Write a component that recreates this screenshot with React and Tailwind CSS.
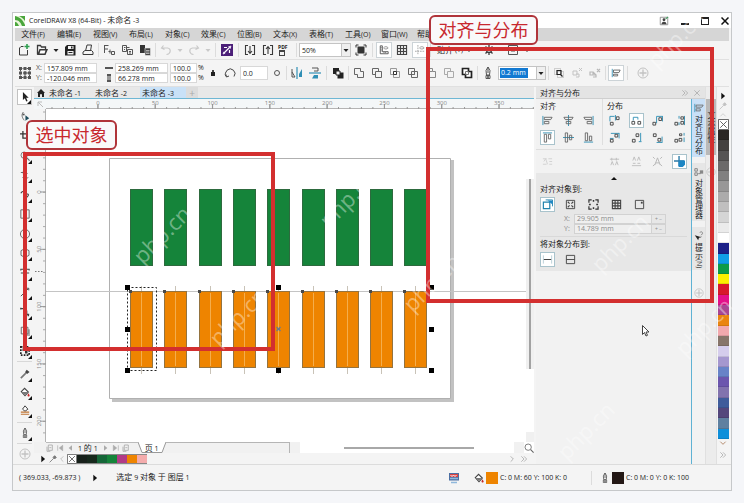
import { useState } from "react";
import clsx from "clsx";

const INK = "#3a3a3a";
const BLUE = "#2f8fb5";

// All icons are drawn on a 12x12 grid
const ICONS = {
  newDoc: (
    <>
      <path d="M5.5 2.5H3L1.5 4v7h8V6" stroke={INK} fill="none" />
      <path d="M9 0v5M6.5 2.5h5" stroke="#2f9e4f" strokeWidth="1.6" />
    </>
  ),
  open: (
    <>
      <path d="M1.5 10.5v-9h3l1 1.500h4v2" stroke={INK} strokeWidth="1.3" fill="none" />
      <path d="M1 11l2.500-6H12l-2.500 6z" fill={INK} />
      <path d="M4.500 6.500h5L8.500 9.500h-5z" fill="#fff" />
    </>
  ),
  save: (
    <>
      <path d="M1 3l2-2h8.500v10.500H1z" fill="#222" />
      <path d="M4 2h5.500v3H4zM3.500 7h6v3.500h-6z" fill="#f4f4f4" />
      <path d="M7 2.500h1.500v2H7zM4.500 8h4v1h-4z" fill="#222" />
    </>
  ),
  print: (
    <>
      <path d="M3.500 7L5 1h4.500L8.500 7" stroke={INK} fill="none" />
      <path d="M1 10.500V8l2-1.500h6.500L11 8v2.500z" stroke={INK} fill="none" />
    </>
  ),
  cut: (
    <path d="M1 1.500h4.500M1.500 1v8M1.500 5H5M7 5.500v4M5.500 7.500h2M8.500 7.500h3v3h-3z" stroke="#555" fill="none" />
  ),
  copy: (
    <path d="M1.500 1.500h4v6h-4zM4.500 3.500h4M6.500 5.500h5v5h-5zM8 7.500h2M8 9h2M3 3.500h1M3 5.500h1" stroke="#555" fill="none" />
  ),
  paste: (
    <>
      <path d="M1 1h5v8H1z" fill="#333" />
      <path d="M6 4h5.500v7.500H6z" fill="#444" stroke="#eee" strokeWidth=".6" />
      <path d="M7 6.500h3.500M7 8h3.500M7 9.500h3.500" stroke="#ddd" strokeWidth=".7" />
    </>
  ),
  undo: <path d="M3.500 1.500L1.500 4l3 1.500M2 4h5.500c4 .5 3.500 6-1 6.500" stroke="#c9c9c9" strokeWidth="1.200" fill="none" />,
  redo: <path d="M8.500 1.500l2 2.500-3 1.500M10 4H4.500C.5 4.500 1 10 5.500 10.500" stroke="#c9c9c9" strokeWidth="1.200" fill="none" />,
  connect: (
    <>
      <path d="M0 0h12v12H0z" fill="#4b1f78" />
      <path d="M2 10l8-8M3 3.500h3M8.500 6v3" stroke="#fff" strokeWidth="1.200" />
      <path d="M7 2h3v3zM2 7.500V10h2.500z" fill="#e9dcf6" />
    </>
  ),
  importFile: (
    <path d="M4 1.500H1.500v9H4M8 1.500h2.500v9H8M6 2v7M4 7l2 2.300L8 7" stroke={INK} strokeWidth="1.100" fill="none" />
  ),
  exportFile: (
    <path d="M4 1.500H1.500v9H4M8 1.500h2.500v9H8M6 10V3M4 5l2-2.300L8 5" stroke={INK} strokeWidth="1.100" fill="none" />
  ),
  fullscreen: (
    <>
      <path d="M1 3.500V1h2.500M8.500 1H11v2.500M11 8.500V11H8.500M3.500 11H1V8.500" stroke="#333" fill="none" />
      <path d="M2.500 2.500h7v7h-7z" fill="#333" />
    </>
  ),
  rulers: (
    <>
      <path d="M1.500 1v9.500H11V8H4V1zM2 3h1M2 5h1M2 7h1M6 9.500v-1M8 9.500v-1" stroke="#444" fill="none" />
      <path d="M5.500 3.500c1.500-2 4-2 5.500 0-1.500 1.800-4 1.800-5.500 0z" stroke="#666" fill="none" strokeWidth=".8" />
    </>
  ),
  grid: <path d="M1.500 1.500h9v9h-9zM4.500 1.500v9M7.500 1.500v9M1.500 4.500h9M1.500 7.500h9" stroke="#444" strokeWidth="1.200" fill="none" />,
  guides: (
    <>
      <path d="M3.500 0v12M0 7.500h11" stroke="#999" strokeDasharray="2 1" />
      <path d="M5.500 3.500c1.500-2 4-2 5.500 0-1.500 1.800-4 1.800-5.500 0z" stroke="#777" fill="none" strokeWidth=".8" />
    </>
  ),
  gear: (
    <path d="M6 1v2M6 9v2M1 6h2M9 6h2M2.500 2.500L4 4M8 8l1.500 1.500M9.500 2.500L8 4M4 8L2.500 9.500M6 3.500a2.500 2.500 0 100 5 2.500 2.500 0 000-5z" stroke={INK} strokeWidth="1.300" fill="none" />
  ),
  launch: <path d="M1.500 1.500h9v9h-9zM1.500 3.500h9M4 7h4" stroke="#555" fill="none" />,
  origin: (
    <>
      <path d="M1.500 1.500h9v9h-9zM6 1v10M1 6h10" stroke="#555" strokeDasharray="2 1" fill="none" />
      <path d="M0 0h3v3H0zM4.500 0h3v3h-3zM9 0h3v3H9zM0 4.500h3v3H0zM4.500 4.500h3v3h-3zM9 4.500h3v3H9zM0 9h3v3H0zM4.500 9h3v3h-3zM9 9h3v3H9z" fill="#555" />
    </>
  ),
  rotate: <path d="M2.500 9.500A4.700 4.700 0 1110 9.500M1 7.500l1.500 2.500L5 9" stroke="#444" fill="none" />,
  mirrorH: (
    <>
      <path d="M1 2v8h3L1 5" stroke="#555" fill="none" />
      <path d="M11 2v8H8V7z" fill={BLUE} />
      <path d="M6 0v12" stroke={BLUE} strokeWidth="1.200" />
    </>
  ),
  mirrorV: (
    <>
      <path d="M3 1h6v3H5" stroke="#555" fill="none" />
      <path d="M0 6h12" stroke={BLUE} strokeWidth="1.200" />
      <path d="M3 11.500h6V8H5z" fill={BLUE} />
    </>
  ),
  order: (
    <>
      <path d="M1 1h6v6H1zM5.500 5.500h6v6h-6z" fill="#222" />
      <path d="M4 4h4v4H4z" fill="#f4f4f4" stroke="#222" />
    </>
  ),
  weld: <path d="M1.500 1.500h6v3h3v6h-6v-3h-3z" stroke="#666" fill="none" />,
  trim: <path d="M4 7.500H1.500v-6h6V4M4.500 4.500h6v6h-6z" stroke="#666" fill="none" />,
  intersect: (
    <>
      <path d="M1.500 1.500h6v6h-6zM4.500 4.500h6v6h-6z" stroke="#999" fill="none" />
      <path d="M4.500 4.500h3v3h-3z" stroke="#333" fill="#fff" />
    </>
  ),
  simplify: <path d="M1.500 1.500h6v6h-6zM7.500 4.500h3v6h-6v-3M4.500 4.500h3v3h-3z" stroke="#666" fill="none" />,
  frontMinus: <path d="M1.500 1.500h6v3h-3v3h-3zM7.500 4.500h3v6h-6v-3" stroke="#888" fill="none" />,
  backMinus: <path d="M4 7.500H1.500v-6h6V4M4.500 4.500h6v6h-6z" stroke="#aaa" fill="none" />,
  boundary: (
    <>
      <path d="M1.500 1.500h6v3h3v6h-6v-3h-3z" stroke="#222" strokeWidth="1.700" fill="#fff" />
      <path d="M4.500 4.500h3v3h-3z" stroke="#777" fill="none" />
    </>
  ),
  pen: (
    <>
      <path d="M6 0L4 3.500 4.500 8h3L8 3.500zM6 0v6M4 8.500h4v3H4z" stroke="#555" fill="none" />
      <path d="M5 9h2v2H5z" fill="#777" />
    </>
  ),
  combine: (
    <>
      <path d="M1.500 1.500h6v6h-6zM4.500 4.500h6v6h-6z" stroke="#aaa" strokeDasharray="1 1" fill="none" />
      <path d="M4 3.500h4v4H4zM7 7l2.500 2.500" stroke="#222" strokeWidth="1.200" fill="none" />
    </>
  ),
  ungroup: <path d="M2 4h4v4H2zM5 7h3v3H5M8 1l3 3M11 1L8 4" stroke="#c3c3c3" fill="none" />,
  ungroupAll: <path d="M1 5h3v3H1zM4 8h3v2H4M8 2l3 3M11 2L8 5M4 5l3 3" stroke="#b8b8b8" strokeWidth="1.200" fill="none" />,
  alignDist: (
    <>
      <path d="M1.500 1v10" stroke={BLUE} />
      <path d="M3 2.500h8L9.500 5.500H3zM3 7.500h5v2H3z" stroke="#555" fill="none" />
    </>
  ),
  plus: (
    <>
      <circle cx="6" cy="6" r="5" stroke="#c2c2c2" fill="none" />
      <path d="M6 2.500v7M2.500 6h7" stroke="#c2c2c2" strokeWidth="1.300" />
    </>
  ),
  pick: <path d="M3.500 0v9.500l2.300-2L7.500 11.500l1.600-.7L7.400 7h3z" fill="#222" />,
  shape: (
    <>
      <path d="M4 0C1 4 3 7 5 10" stroke="#555" fill="none" />
      <path d="M3 2h2.500v2H3z" fill="#555" />
      <path d="M6.500 4v6.500L11 7.500z" fill="#1d4b5a" />
    </>
  ),
  crop: <path d="M3.500 0v8.500H12M0 3.500h8.500V12" stroke="#333" strokeWidth="1.500" fill="none" />,
  zoom: (
    <>
      <circle cx="5" cy="5" r="3.800" stroke="#666" fill="none" />
      <path d="M8 8l3.500 3.500" stroke="#666" strokeWidth="1.400" />
    </>
  ),
  freehand: <path d="M1 3h4l1 4 3-3M3 9c2-3 4 2 7 0M4 1v4" stroke="#555" fill="none" />,
  artistic: <path d="M1 4c2-4 5-2 4 1s2 5 4 3 1-4-1-3-3 3-4 4" stroke="#444" strokeWidth="1.300" fill="none" />,
  rect: <path d="M1 1h10v10H1z" stroke="#555" fill="none" />,
  ellipse: <circle cx="6" cy="6" r="5.500" stroke="#555" fill="none" />,
  polygon: <path d="M6 .6l4.800 2.600v5.600L6 11.400 1.200 8.800V3.200z" stroke="#555" fill="none" />,
  text: <path d="M1 3V1.500h10V3M6 1.500v9M4 10.500h4M1 6h3M8 6h3" stroke="#444" strokeWidth="1.300" fill="none" />,
  line: <path d="M1 11l3-3M5 7l5-5M8 1.500h2.500V4" stroke="#555" strokeWidth="1.200" fill="none" />,
  connector: <path d="M1 2h4v3h3v4h3M1 1v2M10 8v3" stroke="#444" strokeWidth="1.600" fill="none" />,
  shadow: (
    <>
      <path d="M4 4h8v8H4z" fill="#aaa" />
      <path d="M1.500 1.500h8v8h-8z" stroke="#555" fill="#f4f4f4" />
    </>
  ),
  transparency: (
    <>
      <path d="M1 1h10v10H1z" stroke="#222" strokeWidth="2" strokeDasharray="2 1.500" fill="none" />
      <path d="M3 3h3v3H3zM6 6h3v3H6z" fill="#333" />
    </>
  ),
  eyedropper: (
    <>
      <path d="M1 11l6-6" stroke="#777" strokeWidth="2" />
      <path d="M6 4l2-3 3.500 2.500-3 2.500z" fill="#444" />
    </>
  ),
  fill: (
    <>
      <path d="M1.500 5.500l4-4 4.500 4.500-4 4.500z" stroke="#444" strokeWidth="1.300" fill="#fff" />
      <path d="M2.500 6h6.500L6 9.500z" fill="#777" />
      <path d="M10 7.500l1.600 2.300c0 2-2.600 2-2.600 0z" fill="#c62828" />
    </>
  ),
  smartFill: (
    <>
      <path d="M3 5l3-4 3.500 4L6 7.500z" stroke="#444" strokeWidth="1.200" fill="#fff" />
      <path d="M1 8.500h10M1 11h10" stroke="#c07433" strokeWidth="1.300" />
    </>
  ),
  userAccount: (
    <>
      <path d="M1.500 1.500h9v9h-9z" stroke="#888" fill="#fff" />
      <circle cx="6" cy="4.500" r="1.700" fill="#444" />
      <path d="M3 10c0-4 6-4 6 0z" fill="#444" />
      <path d="M8 3.500L11 1" stroke="#3b9b5a" strokeWidth="1.300" />
    </>
  ),
  monitor: (
    <>
      <path d="M1 1h10v7.500H1z" fill="#4b6fa3" />
      <path d="M2 2h8v3H2z" fill="#d84343" />
      <path d="M2.500 3l1.500 1.500L5.500 3 7 4.500 8.500 3" stroke="#fff" fill="none" />
      <path d="M3 10.500h6M2 6.500h8" stroke="#8fb8dc" strokeWidth="1.500" />
    </>
  ),
  // Alignment group
  alignLeft: (
    <>
      <path d="M1 1v10" stroke={BLUE} />
      <path d="M2.500 2.500h8.500L9.500 5h-7zM2.500 7h5v2.500h-5z" stroke="#666" fill="none" />
    </>
  ),
  alignCenterH: (
    <>
      <path d="M6 0v12" stroke={BLUE} />
      <path d="M1 2.500h10L9.500 5h-7zM3.500 7h5v2.500h-5z" stroke="#666" fill="none" />
    </>
  ),
  alignRight: (
    <>
      <path d="M11 1v10" stroke={BLUE} />
      <path d="M1 2.500h8.500V5H2.500zM4.500 7h5v2.500h-5z" stroke="#666" fill="none" />
    </>
  ),
  alignTop: (
    <>
      <path d="M1 1h10" stroke={BLUE} />
      <path d="M2.500 2.500H5V11H2.500zM7 2.500h2.500v5H7z" stroke="#666" fill="none" />
    </>
  ),
  alignCenterV: (
    <>
      <path d="M0 6h12" stroke={BLUE} />
      <path d="M2.500 1H5v10H2.500zM7 3.500h2.500v5H7z" stroke="#666" fill="none" />
    </>
  ),
  alignBottom: (
    <>
      <path d="M1 11h10" stroke={BLUE} />
      <path d="M2.500 1H5v8.500H2.500zM7 4.500h2.500v5H7z" stroke="#666" fill="none" />
    </>
  ),
  // Distribution group
  distLeft: (
    <>
      <path d="M1 7V1.500h5M7 6V0" stroke={BLUE} fill="none" />
      <path d="M1.500 8h3v3h-3zM8 2h3v3H8z" stroke="#444" fill="none" />
    </>
  ),
  distCenter: (
    <>
      <path d="M2.500 6V2.500h5V5" stroke={BLUE} fill="none" />
      <path d="M1 7h3v3H1zM7.500 7h3v3h-3z" stroke="#444" fill="none" />
    </>
  ),
  distRight: (
    <>
      <path d="M5 9V1.500h6M11.500 1v6" stroke={BLUE} fill="none" />
      <path d="M1 8h3v3H1zM7.500 3h3v3h-3z" stroke="#444" fill="none" />
    </>
  ),
  distSpaceH: (
    <>
      <path d="M5.500 1v3M5.500 8v3M11.500 1v10" stroke={BLUE} fill="none" />
      <path d="M1 8h3v3H1zM7.500 2h3v2.500h-3zM7.500 7h3v3h-3z" stroke="#444" fill="none" />
    </>
  ),
  distTop: (
    <>
      <path d="M2 1.500h9M11 1v6M1 7h4" stroke={BLUE} fill="none" />
      <path d="M1.500 8h3v3h-3zM6.500 2.500h3v3h-3z" stroke="#444" fill="none" />
    </>
  ),
  distMiddle: (
    <>
      <path d="M10.500 1v9M8.500 10.500h3" stroke={BLUE} fill="none" />
      <path d="M1.500 8h3v3h-3zM5.500 2h3v3h-3z" stroke="#444" fill="none" />
    </>
  ),
  distBottom: (
    <>
      <path d="M5 11.500h6.500M11 5v6" stroke={BLUE} fill="none" />
      <path d="M1.500 2h3v3h-3zM6.500 7h3v3h-3z" stroke="#444" fill="none" />
    </>
  ),
  distSpaceV: (
    <>
      <path d="M11 1v3M11 6v5" stroke={BLUE} fill="none" />
      <path d="M1 8h3v3H1zM5.500 7h3v3h-3zM6 2h2.500v2H6z" stroke="#444" fill="none" />
    </>
  ),
  textLine: <path d="M1 3h4M2 6l2-3 2 6M7 3h4M8 6h3M1 9h4M8 9h3" stroke="#d0d0d0" fill="none" />,
  textFirst: <path d="M1 3.500h10M3 2v3M8 2v3M2 10l1.500-4L5 10M7 10l1.500-4L10 10" stroke="#bdbdbd" fill="none" />,
  textLast: <path d="M1 10.500h10M2 5l1.500-4L5 5M7 5l1.500-4L10 5M2 8h3M7 8h3" stroke="#bdbdbd" fill="none" />,
  textBox: (
    <>
      <path d="M1 1l2 2M11 1L9 3M1 11l2-2M11 11L9 9" stroke="#b5b5b5" />
      <path d="M3 10l3-8 3 8M4 7.500h4" stroke="#b5b5b5" fill="none" />
    </>
  ),
  refPoint: (
    <>
      <path d="M5.500 0v11M0 5.500h11" stroke="#2a7aa8" strokeWidth="1.500" />
      <path d="M5 5h7v4.500L9.500 12H5z" fill="#1c86c4" />
    </>
  ),
  activeObjects: (
    <>
      <path d="M1.500 3.500h7v7h-7z" stroke="#2384ad" strokeWidth="1.300" fill="#fff" />
      <path d="M4 1h7.500v7" stroke="#2384ad" fill="none" />
      <path d="M6 1.500h5.500V6z" fill="#1c86c4" />
    </>
  ),
  pageEdge: (
    <>
      <path d="M1.500 1.500h9v9h-9z" stroke="#444" fill="none" />
      <path d="M3 3l2 2M9 3L7 5M3 9l2-2M9 9L7 7" stroke="#444" strokeWidth="1.200" />
    </>
  ),
  pageCenter: (
    <>
      <path d="M1 4V1h3M8 1h3v3M11 8v3H8M4 11H1V8" stroke="#333" strokeWidth="1.300" fill="none" />
      <path d="M6 1v2M6 9v2M1 6h2M9 6h2" stroke="#333" strokeWidth="1.600" />
    </>
  ),
  pagePoint: (
    <>
      <path d="M1.500 1.500h9v9h-9z" stroke="#444" fill="none" />
      <path d="M7.500 3h2v2h-2z" fill="#444" />
    </>
  ),
  spanH: (
    <>
      <path d="M1.500 1.500v9M10.500 1.500v9" stroke="#b9cfd8" />
      <path d="M2 6h8" stroke="#333" />
    </>
  ),
  spanPage: <path d="M1.500 1.500h9v9h-9zM1.500 6h9" stroke="#444" fill="none" />,
  objects: (
    <>
      <path d="M1 2h3v3H1zM1 7h3v3H1zM5 8h3" stroke="#777" fill="none" />
      <path d="M7 4h4v4H7z" fill="#888" />
    </>
  ),
  hints: (
    <>
      <path d="M1 5l4 6 1-3 3-.5z" fill="#222" />
      <path d="M7 2c1-2 4-1 3 1.500L8.500 5M8.500 6v1" stroke="#777" fill="none" />
    </>
  ),
  noFill: <path d="M.5.5h11v11H.5zM2.500 2.500l7 7M9.500 2.500l-7 7" stroke="#555" fill="#fff" />,
  pageAdd: <path d="M3.500 1.500h6v8h-6zM1.500 4v7h5M5 5.500h3" stroke="#999" fill="none" />,
  first: <path d="M2.500 2v8M10 2L5 6l5 4z" stroke="#aaa" fill="#aaa" />,
  prev: <path d="M9 2L4 6l5 4z" fill="#aaa" />,
  next: <path d="M3 2l5 4-5 4z" fill="#aaa" />,
  last: <path d="M9.500 2v8M2 2l5 4-5 4z" stroke="#aaa" fill="#aaa" />,
  play: <path d="M4 2l4.500 4L4 10z" fill="#111" />,
  dropper: <path d="M2 10l5-5M6 4l2-2 2 2-2 2z" stroke="#777" fill="#777" />,
  chevLeft: <path d="M8 2L4 6l4 4" stroke="#bbb" strokeWidth="1.300" fill="none" />,
  chevRight: <path d="M4 2l4 4-4 4" stroke="#aaa" strokeWidth="1.300" fill="none" />,
  chevUp: <path d="M2 8l4-4 4 4" stroke="#ccc" strokeWidth="1.300" fill="none" />,
  chevDown: <path d="M2 4l4 4 4-4" stroke="#b78f72" strokeWidth="1.500" fill="none" />,
  chevDouble: <path d="M2 2l4 4-4 4M6 2l4 4-4 4" stroke="#aaa" strokeWidth="1.200" fill="none" />,
  close: <path d="M2 2l8 8M10 2l-8 8" stroke="#aaa" strokeWidth="1.200" />,
  home: <path d="M6 0l6 6h-1.500v6h-3V8h-3v4h-3V6H0z" fill="#222" />,
};

const MENUS = ["文件(F)", "编辑(E)", "视图(V)", "布局(L)", "对象(C)", "效果(C)", "位图(B)", "文本(X)", "表格(T)", "工具(O)", "窗口(W)", "帮助(H)"];

const TOOLS = ["pick", "shape", "crop", "zoom", "freehand", "artistic", "rect", "ellipse", "polygon", "text", "line", "connector", "shadow", "transparency"];

const PALETTE = [
  "bg-[#2b2724]", "bg-[#444140]", "bg-[#565454]", "bg-[#6c6a6a]", "bg-[#818080]",
  "bg-[#989797]", "bg-[#acabab]", "bg-[#c0bfbf]", "bg-[#d5d5d5]", "bg-[#ebebeb]",
  "bg-white", "bg-[#1c2088]", "bg-[#109ee6]", "bg-[#0e9b48]", "bg-[#fdf000]",
  "bg-[#d8182c]", "bg-[#e3108a]", "bg-[#a94794]", "bg-[#ea8510]", "bg-[#f2a9ae]",
  "bg-[#87756a]", "bg-[#d5cdec]", "bg-[#a597cf]", "bg-[#6883c8]", "bg-[#6c56ae]",
  "bg-[#8273ae]", "bg-[#3f5c9b]", "bg-[#54477c]", "bg-[#5f80a0]", "bg-[#0e8fda]",
];

const DOC_COLORS = ["bg-[#17201a]", "bg-[#16281c]", "bg-[#156638]", "bg-[#15843a]", "bg-[#b23b86]", "bg-[#ee8400]", "bg-[#f4acac]"];

const WATERMARKS = [
  "left-[126px] top-[222px]",
  "left-[202px] top-[304px]",
  "left-[312px] top-[186px]",
  "left-[396px] top-[270px]",
  "left-[584px] top-[230px]",
  "left-[668px] top-[314px]",
  "left-[550px] top-[418px]",
  "left-[640px] top-[26px]",
  "left-[42px] top-[168px]",
];

function Icon({ name, className = "size-3" }) {
  return (
    <svg viewBox="0 0 12 12" className={clsx("shrink-0", className)} aria-hidden="true">
      {ICONS[name]}
    </svg>
  );
}

// Chinese glyphs are set one pixel larger than the latin text beside them
function Label({ text }) {
  return text.split(/([\u4e00-\u9fff]+)/).map((part, i) =>
    /[\u4e00-\u9fff]/.test(part) ? <span key={i} className="text-[8px]">{part}</span> : part
  );
}

function IconButton({ name, boxed, className }) {
  return (
    <button
      type="button"
      aria-label={name}
      className={clsx("flex size-4 shrink-0 items-center justify-center", boxed && "border border-[#ccd3d7] bg-white", className)}
    >
      <Icon name={name} className={boxed ? "size-2.5" : "size-3"} />
    </button>
  );
}

function Caret({ faded }) {
  return (
    <svg viewBox="0 0 8 8" className="size-2 shrink-0" aria-hidden="true">
      <path d="M1.500 3h5L4 6z" fill={faded ? "#c9c9c9" : "#222"} />
    </svg>
  );
}

function Sep({ wide }) {
  return <span className={clsx("h-3.5 w-px shrink-0 bg-[#dcdcdc]", wide && "mx-px")} />;
}

function Field({ label, value, className }) {
  return (
    <input
      aria-label={label}
      defaultValue={value}
      className={clsx("h-2.5 min-w-0 border border-[#d8d8d8] bg-white px-0.5 leading-none outline-none", className)}
    />
  );
}

function Combo({ label, value, selected, className }) {
  return (
    <div className={clsx("relative h-3.5 shrink-0", className)}>
      <select
        aria-label={label}
        className="h-full w-full appearance-none border border-[#c4c4c4] bg-white pl-0.5 leading-none outline-none"
      >
        <option>{value}</option>
      </select>
      {selected && (
        <span className="pointer-events-none absolute top-0.5 left-0.5 h-2.5 w-7 bg-[#1279d2] px-px leading-[10px] whitespace-nowrap text-white">
          {value}
        </span>
      )}
      <span className="pointer-events-none absolute inset-y-0 right-0 flex w-2.5 items-center justify-center border border-[#c4c4c4] bg-[#efefef]">
        <Caret />
      </span>
    </div>
  );
}

function TitleBar() {
  return (
    <header className="flex h-[15px] items-center gap-1 bg-white px-0.5">
      <svg viewBox="0 0 10 10" className="size-2.5" aria-hidden="true">
        <path d="M0 0h10v10H0z" fill="#4aa63c" />
        <path d="M0 0c5 1 8 4 10 9V5C8 2 5 0 3 0zM0 4c4 0 6 3 7 6H4C3 8 2 6 0 6z" fill="#e8f5d8" />
      </svg>
      <h1><Label text="CorelDRAW X8 (64-Bit) - 未命名 -3" /></h1>
      <div className="ml-auto flex items-center gap-3">
        <button type="button" aria-label="Account"><Icon name="userAccount" className="size-2.5" /></button>
        <button type="button" aria-label="Minimize" className="flex size-2 items-end"><span className="h-0.5 w-full bg-[#222]" /></button>
        <button type="button" aria-label="Maximize" className="size-2 border border-t-2 border-[#222]" />
        <button type="button" aria-label="Close" className="size-2">
          <svg viewBox="0 0 8 8" className="size-2"><path d="M.5.5l7 7M7.500.5l-7 7" stroke="#111" strokeWidth="1.500" /></svg>
        </button>
      </div>
    </header>
  );
}

function StandardBar() {
  return (
    <div className="flex h-[19px] items-center gap-0.5 overflow-hidden border-b border-[#e0e0e0] px-px">
      <IconButton name="newDoc" />
      <IconButton name="open" />
      <Caret />
      <IconButton name="save" />
      <IconButton name="print" />
      <Sep />
      <IconButton name="cut" />
      <IconButton name="copy" />
      <IconButton name="paste" />
      <Sep />
      <IconButton name="undo" />
      <Caret faded />
      <IconButton name="redo" />
      <Caret faded />
      <Sep wide />
      <IconButton name="connect" />
      <Sep wide />
      <IconButton name="importFile" />
      <IconButton name="exportFile" />
      <button type="button" className="flex w-4 shrink-0 flex-col items-start text-[5px] leading-[5px] font-bold">
        PDF
        <span className="ml-px size-1.5 border border-[#444] border-t-2" />
      </button>
      <Sep />
      <Combo label="Zoom" value="50%" className="w-13" />
      <IconButton name="fullscreen" />
      <Sep wide />
      <IconButton name="rulers" boxed />
      <IconButton name="grid" />
      <IconButton name="guides" boxed />
      <Sep />
      <button type="button" className="ml-1 flex shrink-0 items-center gap-0.5"><Label text="贴齐(T)" /><Caret /></button>
      <IconButton name="gear" className="ml-1.5" />
      <IconButton name="launch" className="ml-1.5" />
      <Caret />
    </div>
  );
}

function PropertyBar() {
  return (
    <div className="flex h-[27px] items-center gap-0.5 border-b border-[#e0e0e0] px-0.5">
      <IconButton name="origin" />
      <div className="ml-px grid shrink-0 grid-cols-[8px_53px] items-center text-[#555]">
        <span>X:</span>
        <Field label="X" value="157.809 mm" className="text-[#222]" />
        <span>Y:</span>
        <Field label="Y" value="-120.046 mm" className="text-[#222]" />
      </div>
      <div className="ml-1.5 grid shrink-0 grid-cols-[10px_53px] items-center">
        <span className="h-0.5 w-2 bg-[#555]" />
        <Field label="Width" value="258.269 mm" />
        <span className="ml-0.5 h-2 w-1 border-y-2 border-[#555] bg-[#999]" />
        <Field label="Height" value="66.278 mm" />
      </div>
      <div className="grid shrink-0 grid-cols-[27px_8px] items-center gap-x-px">
        <Field label="Scale X" value="100.0" />
        <span>%</span>
        <Field label="Scale Y" value="100.0" />
        <span>%</span>
      </div>
      <button type="button" aria-label="Lock ratio" className="mr-1 ml-0.5 flex w-1.5 shrink-0 flex-col items-center">
        <span className="h-0.5 w-0.5 border border-b-0 border-[#444]" />
        <span className="size-1 bg-[#222]" />
      </button>
      <IconButton name="rotate" />
      <Field label="Rotation" value="0.0" className="h-3.5 w-7 shrink-0" />
      <span className="mx-1 size-1.5 shrink-0 rounded-full border border-[#555]" />
      <Sep />
      <IconButton name="mirrorH" />
      <IconButton name="mirrorV" />
      <Sep wide />
      <IconButton name="order" />
      <Sep />
      <IconButton name="weld" />
      <IconButton name="trim" />
      <IconButton name="intersect" />
      <IconButton name="simplify" />
      <IconButton name="frontMinus" />
      <IconButton name="backMinus" />
      <IconButton name="boundary" />
      <Sep />
      <IconButton name="pen" />
      <Combo label="Outline width" value="0.2 mm" selected className="w-12" />
      <Sep />
      <IconButton name="combine" />
      <IconButton name="ungroup" />
      <IconButton name="ungroupAll" />
      <Sep />
      <IconButton name="alignDist" boxed />
      <Sep wide />
      <IconButton name="plus" className="ml-1" />
    </div>
  );
}

function ToolButton({ name, active, onClick }) {
  return (
    <button
      type="button"
      aria-label={name}
      onClick={onClick}
      className={clsx("relative flex h-4 w-full shrink-0 items-center justify-center", active && "border border-[#c2c2c2] bg-white")}
    >
      <Icon name={name} className="size-2.5" />
      <svg viewBox="0 0 4 4" className="absolute right-0 bottom-0 size-1" aria-hidden="true">
        <path d="M4 0v4H0z" fill="#111" />
      </svg>
    </button>
  );
}

function Toolbox() {
  const [tool, setTool] = useState("pick");
  return (
    <aside className="flex w-[19px] shrink-0 flex-col gap-0.5 px-0.5 pt-0.5">
      <div className="flex flex-1 flex-col justify-between">
        {TOOLS.map((name) => (
          <ToolButton key={name} name={name} active={tool === name} onClick={() => setTool(name)} />
        ))}
      </div>
      <div className="flex flex-col gap-0.5 border-y border-[#d8d8d8] py-1">
        <ToolButton name="eyedropper" />
        <ToolButton name="fill" />
        <ToolButton name="smartFill" />
      </div>
      <ToolButton name="pen" />
      <div className="flex justify-center border-t border-[#d8d8d8] py-1">
        <Icon name="plus" />
      </div>
    </aside>
  );
}

// 50 mm on the ruler takes 57.3 px, ticks every 10 mm
const RULER_STEP = 57.3;

function HorizontalRuler() {
  return (
    <svg className="h-2.5 w-full bg-[#f4f7f8]" aria-hidden="true">
      <path d="M12 9.500H600" stroke="#b4b4b4" />
      {Array.from({ length: 44 }, (_, i) => (
        <path key={i} d={`M${18 + i * 11.46} ${i % 5 === 4 ? 6 : 8}V10`} stroke="#999" />
      ))}
      {Array.from({ length: 8 }, (_, i) => (
        <g key={i}>
          <path d={`M${64 + i * RULER_STEP} 5V10`} stroke="#999" />
          <text x={64 + i * RULER_STEP} y="6" textAnchor="middle" fontSize="6" fill="#888">{i * 50}</text>
        </g>
      ))}
      <path d="M4 3l5 5M4 7V3h4" stroke="#bbb" fill="none" />
    </svg>
  );
}

function VerticalRuler() {
  return (
    <svg className="w-3 shrink-0 self-stretch bg-[#f4f4f4]" aria-hidden="true">
      <path d="M11.500 0V400" stroke="#b4b4b4" />
      {Array.from({ length: 29 }, (_, i) => (
        <path key={i} d={`M9 ${3 + i * 11.46}H12`} stroke="#aaa" />
      ))}
      {Array.from({ length: 5 }, (_, i) => {
        const y = 83 + i * RULER_STEP;
        return (
          <g key={i}>
            <path d={`M6 ${y}H12`} stroke="#999" />
            <text x="7" y={y} textAnchor="middle" transform={`rotate(-90 7 ${y})`} fontSize="6" fill="#888">{i * 50}</text>
          </g>
        );
      })}
      <path d="M1 162.500h9" stroke="#777" strokeDasharray="1.500 1.500" />
    </svg>
  );
}

function Canvas() {
  const bars = Array.from({ length: 9 }, (_, i) => Math.round(84 + i * 34.3) + 0.5);
  const handles = [[81, 178], [232, 178], [385, 178], [81, 220], [385, 220], [81, 261], [232, 261], [385, 261]];
  return (
    <svg className="min-h-0 min-w-0 flex-1 bg-white" role="img" aria-label="Drawing">
      <path d="M404 51h4v242H66v-3h338z" fill="#c2c2c2" />
      <path d="M63.500 49.500h341v240h-341z" stroke="#b0b0b0" fill="#fff" />
      <path d="M0 182.500h600" stroke="#c4c4c4" />
      {bars.map((x) => (
        <g key={x}>
          <rect x={x} y="80.500" width="22" height="76" fill="#15843a" stroke="#2d6a3e" />
          <path d={`M${x + 11} 177v5M${x + 11} 259v6`} stroke="#c9c3b8" />
          <rect x={x} y="182.500" width="22" height="76" fill="#ee8400" stroke="#94733f" />
          <path d={`M${x + 11} 184v73`} stroke="#f4ad4c" />
          <rect x={x - 1.500} y="181" width="3" height="3" fill="#4a4a4a" />
        </g>
      ))}
      <rect x="81.500" y="178.500" width="29" height="83" stroke="#222" strokeDasharray="2 2" fill="none" />
      {handles.map(([x, y]) => (
        <rect key={`${x}-${y}`} x={x - 2} y={y - 2} width="5" height="5" fill="#000" />
      ))}
      <path d="M230.500 218l4 4M234.500 218l-4 4M231 220h3" stroke="#6b7a8c" strokeWidth="1.300" />
    </svg>
  );
}

function DocumentArea() {
  return (
    <section className="flex min-w-0 flex-1 flex-col">
      <nav className="flex h-3 items-stretch border-b border-[#6fb7d4] bg-[#e8e8e8] text-left">
        <button type="button" aria-label="Home" className="flex w-3.5 items-center justify-center"><Icon name="home" className="size-2" /></button>
        <button type="button" className="w-[46px] pl-px text-left leading-none"><Label text="未命名 -1" /></button>
        <button type="button" className="w-[46px] pl-px text-left leading-none"><Label text="未命名 -2" /></button>
        <button type="button" className="w-[46px] bg-[#c9e1f7] pl-0.5 text-left leading-none"><Label text="未命名 -3" /></button>
        <button type="button" aria-label="New tab" className="w-3 bg-[#dcdcdc] text-[10px] leading-none text-[#aaa]">+</button>
      </nav>
      <HorizontalRuler />
      <div className="flex min-h-0 flex-1">
        <VerticalRuler />
        <Canvas />
        <div className="flex w-2 flex-col items-center bg-white pt-[70px]">
          <span className="h-[190px] w-full border-x-3 border-[#f0f0f0] bg-[#a2a2a2]" />
          <span className="mt-auto h-2.5 w-full bg-[#f0f0f0]" />
        </div>
      </div>
      <div className="flex h-[11px] items-center bg-[#f1f1f1] pl-3">
        <div className="flex h-full items-center gap-0.5 border-t border-[#bbb] pr-2">
          <Icon name="pageAdd" className="size-2" />
          <Icon name="first" className="size-2" />
          <Icon name="prev" className="size-2" />
          <span className="px-0.5 leading-none"><Label text="1 的 1" /></span>
          <Icon name="next" className="size-2" />
          <Icon name="last" className="size-2" />
          <Icon name="pageAdd" className="size-2" />
        </div>
        <button type="button" className="relative flex h-full w-7 items-center justify-center leading-none">
          <svg viewBox="0 0 28 11" className="absolute inset-0 h-full w-full" aria-hidden="true">
            <path d="M0 0l4 10.500h20L28 0z" fill="#fff" />
            <path d="M0 0l4 10.500h20L28 0" stroke="#999" fill="none" />
          </svg>
          <span className="relative"><Label text="页 1" /></span>
        </button>
        <div className="h-full w-[124px] border-t border-r border-[#b5b5b5]" />
        <div className="flex h-full min-w-0 flex-1 items-center bg-white">
          <span className="h-full w-2.5 bg-[#f1f1f1]" />
          <span className="ml-11 h-0.5 w-[130px] bg-[#a8a8a8]" />
          <span className="ml-auto h-full w-2.5 bg-[#f1f1f1]" />
          <Icon name="zoom" className="size-2.5" />
        </div>
      </div>
      <div className="flex h-[11px] items-center pl-1">
        <Icon name="play" className="size-2.5" />
        <Icon name="dropper" className="size-2.5" />
        <Icon name="chevLeft" className="size-2" />
        <button type="button" aria-label="No fill" className="ml-px size-2.5"><Icon name="noFill" className="size-2.5" /></button>
        {DOC_COLORS.map((color) => (
          <button key={color} type="button" aria-label="Swatch" className={clsx("h-2.5 w-2.5 border-y border-[#888]", color)} />
        ))}
        <div className="ml-auto flex gap-1 pr-1.5">
          <Icon name="chevRight" className="size-2" />
          <Icon name="chevDouble" className="size-2" />
        </div>
      </div>
    </section>
  );
}

function PanelIcon({ name, active }) {
  return (
    <button
      type="button"
      aria-label={name}
      className={clsx("flex size-[15px] items-center justify-center", active && "border border-[#a9c3cc] bg-white")}
    >
      <Icon name={name} className="size-[11px]" />
    </button>
  );
}

function AlignPanel() {
  return (
    <div className="flex min-w-0 flex-1 flex-col border-r border-[#5fb2d4] bg-[#f2f2f2]">
      <div className="flex px-1">
        <div className="w-[63px] border-r border-[#dedede]">
          <h3 className="text-[8px] leading-[14px]">对齐</h3>
          <div className="grid grid-cols-3 gap-y-0.5">
            <PanelIcon name="alignLeft" />
            <PanelIcon name="alignCenterH" />
            <PanelIcon name="alignRight" />
            <PanelIcon name="alignTop" active />
            <PanelIcon name="alignCenterV" />
            <PanelIcon name="alignBottom" />
          </div>
        </div>
        <div className="flex-1 pl-1">
          <h3 className="text-[8px] leading-[14px]">分布</h3>
          <div className="grid grid-cols-[repeat(4,15px)] justify-between gap-y-0.5">
            <PanelIcon name="distLeft" />
            <PanelIcon name="distCenter" active />
            <PanelIcon name="distRight" />
            <PanelIcon name="distSpaceH" />
            <PanelIcon name="distTop" />
            <PanelIcon name="distMiddle" />
            <PanelIcon name="distBottom" />
            <PanelIcon name="distSpaceV" />
          </div>
        </div>
      </div>
      <div className="mt-1 flex border-t border-[#dedede] px-1 py-1">
        <div className="w-[63px]"><PanelIcon name="textLine" /></div>
        <div className="grid flex-1 grid-cols-[repeat(4,15px)] justify-between pl-1">
          <PanelIcon name="textFirst" />
          <PanelIcon name="textLast" />
          <PanelIcon name="textBox" />
          <PanelIcon name="refPoint" active />
        </div>
      </div>
      <div className="bg-[#e7e7e7] px-1 pb-1">
        <div className="flex h-2.5 items-center justify-center">
          <svg viewBox="0 0 6 4" className="h-1 w-1.5" aria-hidden="true"><path d="M0 4l3-3 3 3z" fill="#111" /></svg>
        </div>
        <h3 className="leading-[12px]"><Label text="对齐对象到:" /></h3>
        <div className="flex gap-2 pt-px">
          <PanelIcon name="activeObjects" active />
          <PanelIcon name="pageEdge" />
          <PanelIcon name="pageCenter" />
          <PanelIcon name="grid" />
          <PanelIcon name="pagePoint" />
        </div>
        <div className="mt-0.5 grid grid-cols-[10px_78px_14px] items-center pl-6 text-[#8a8a8a]">
          <label htmlFor="point-x">X:</label>
          <input id="point-x" defaultValue="29.905 mm" className="h-2.5 min-w-0 border border-[#d2d2d2] bg-[#efefef] px-0.5" />
          <span className="h-2.5 border border-l-0 border-[#d2d2d2] text-center text-[5px] leading-[8px]">+ −</span>
          <label htmlFor="point-y">Y:</label>
          <input id="point-y" defaultValue="14.789 mm" className="h-2.5 min-w-0 border border-[#d2d2d2] bg-[#efefef] px-0.5" />
          <span className="h-2.5 border border-l-0 border-[#d2d2d2] text-center text-[5px] leading-[8px]">+ −</span>
        </div>
        <h3 className="mt-0.5 border-t border-[#d9d9d9] pt-px leading-[12px]"><Label text="将对象分布到:" /></h3>
        <div className="flex gap-2 pt-px">
          <PanelIcon name="spanH" active />
          <PanelIcon name="spanPage" />
        </div>
      </div>
    </div>
  );
}

function DockTab({ icon, text, active }) {
  return (
    <button
      type="button"
      className={clsx("flex w-full flex-col items-center gap-0.5 pt-1 pb-0.5", active ? "bg-[#c9e0f7]" : "bg-[#e6e6e6]")}
    >
      <Icon name={icon} className="size-2.5" />
      <span className="leading-[10px] [writing-mode:vertical-rl]"><Label text={text} /></span>
    </button>
  );
}

function Docker() {
  return (
    <section className="ml-0.5 flex w-[169px] shrink-0 flex-col">
      <div className="flex h-3 items-center border-b border-[#cfcfcf] bg-[#e4e4e4] px-1">
        <h2 className="text-[8px] leading-none">对齐与分布</h2>
        <div className="ml-auto flex gap-1">
          <Icon name="chevDouble" className="size-2" />
          <Icon name="close" className="size-2" />
        </div>
      </div>
      <div className="flex flex-1">
        <AlignPanel />
        <div className="flex w-[13px] flex-col gap-1.5 bg-[#f2f2f2]">
          <DockTab icon="alignLeft" text="对齐与分布" active />
          <DockTab icon="objects" text="对象管理器" />
          <DockTab icon="hints" text="提示(N)" />
          <div className="mt-3 flex justify-center"><Icon name="plus" className="size-2.5" /></div>
        </div>
      </div>
    </section>
  );
}

function ColorPalette() {
  return (
    <aside className="flex w-3 shrink-0 flex-col items-center pt-1">
      <Icon name="play" className="size-2.5" />
      <Icon name="dropper" className="size-2.5 opacity-40" />
      <Icon name="chevUp" className="size-2" />
      <button type="button" aria-label="No fill"><Icon name="noFill" className="size-[11px]" /></button>
      <div className="flex w-[11px] flex-1 flex-col">
        {PALETTE.map((color) => (
          <button key={color} type="button" aria-label="Swatch" className={clsx("flex-1 border-b border-black/10", color)} />
        ))}
      </div>
      <div className="flex h-[25px] flex-col items-center gap-1">
        <Icon name="chevDown" className="size-2" />
        <Icon name="chevDouble" className="size-2" />
      </div>
    </aside>
  );
}

function StatusBar() {
  return (
    <footer className="flex h-[26px] items-center border-t border-[#dcdcdc] px-1.5">
      <span>( 369.033, -69.873 )</span>
      <Icon name="play" className="mx-2.5 size-2.5" />
      <span className="ml-1.5"><Label text="选定 9 对象 于 图层 1" /></span>
      <div className="ml-auto flex items-center pr-9">
        <Icon name="monitor" />
        <Icon name="fill" className="ml-3.5 size-2.5" />
        <span className="mx-0.5 size-3 bg-[#ee8400]" />
        <span className="mr-6">C: 0 M: 60 Y: 100 K: 0</span>
        <Sep />
        <Icon name="pen" className="ml-2 size-2.5" />
        <span className="mx-0.5 size-3 bg-[#231815]" />
        <span>C: 0 M: 0 Y: 0 K: 100</span>
      </div>
    </footer>
  );
}

function Callout({ text, className }) {
  return (
    <p
      className={clsx(
        "absolute flex h-[30px] items-center justify-center rounded-md border-2 border-[#b0343a] bg-[#f9f9fa] text-[18px] leading-none text-[#c8282e]",
        className
      )}
    >
      {text}
    </p>
  );
}

export default function App() {
  return (
    <main className="relative flex min-h-screen flex-col overflow-hidden bg-[#f5f6f9] p-3 font-['Open_Sans','Noto_Sans_CJK_SC',sans-serif] text-[7px] leading-[10px] text-[#222]">
      <div className="flex flex-1 flex-col border border-[#c6c8ca] bg-[#f4f4f4]">
        <TitleBar />
        <nav className="mx-0.5 flex h-[13px] items-center gap-3 overflow-hidden bg-[#d6d6d6] px-1.5">
          {MENUS.map((menu) => (
            <button key={menu} type="button" className="w-6 shrink-0 whitespace-nowrap"><Label text={menu} /></button>
          ))}
        </nav>
        <div className="px-0.5">
          <StandardBar />
          <PropertyBar />
        </div>
        <div className="flex flex-1 px-0.5">
          <Toolbox />
          <DocumentArea />
          <Docker />
          <div className="w-3 shrink-0 border-x border-[#e0e0e0] bg-[#ececec] pt-3">
            <button type="button" className="flex h-14 w-full items-center justify-center bg-[#b9b9b9]">
              <span className="text-[8px] leading-[10px] [writing-mode:vertical-rl]">文本属性</span>
            </button>
            <div className="flex justify-center pt-3"><Icon name="plus" className="size-2.5" /></div>
          </div>
          <ColorPalette />
        </div>
        <StatusBar />
      </div>

      {/* Mouse pointer */}
      <svg viewBox="0 0 8 12" className="absolute top-[325px] left-[642px] h-3 w-2" aria-hidden="true">
        <path d="M.5.5v9l2-2 1.500 3.500 1.500-.7L4 7h3z" fill="#fff" stroke="#444" />
      </svg>

      {/* Highlight frames */}
      <div className="pointer-events-none absolute top-[152px] left-[23px] h-[199px] w-[252px] border-4 border-[#d32f2f]" />
      <div className="pointer-events-none absolute top-[47px] left-[426px] h-[256px] w-[288px] border-4 border-[#d32f2f]" />
      <Callout text="选中对象" className="top-[120px] left-[26px] w-[91px]" />
      <Callout text="对齐与分布" className="top-[15px] left-[429px] w-[109px]" />

      {WATERMARKS.map((place) => (
        <span key={place} aria-hidden="true" className={clsx("pointer-events-none absolute -rotate-45 text-[22px] leading-6 font-medium text-white/40", place)}>
          php.cn
        </span>
      ))}
    </main>
  );
}
